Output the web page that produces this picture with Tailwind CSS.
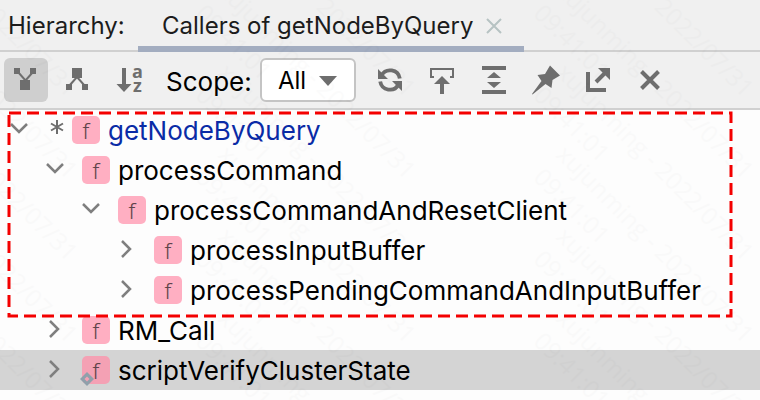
<!DOCTYPE html>
<html lang="en">
 <head>
  <meta charset="utf-8"/>
  <meta content="width=device-width, initial-scale=1" name="viewport"/>
  <title>
   Hierarchy: Callers of getNodeByQuery
  </title>
  <script src="https://cdn.jsdelivr.net/npm/@tailwindcss/browser@4"></script>
 </head>
 <body class="relative min-h-screen overflow-x-hidden bg-[#fdfdfd] font-['Inter',sans-serif] text-black">
  <header class="flex h-[52px] items-stretch border-b-2 border-[#d0d0d0] bg-[#f0f0f0] text-2xl text-[#1c1c1c]">
   <h1 class="flex w-[138px] shrink-0 items-center pt-0.5 pl-2">Hierarchy:</h1>
   <div class="-mb-0.5 flex items-center border-b-6 border-[#a3adc0] pt-1.5 pr-[22px] pl-6" role="tab">
    <span>Callers of getNodeByQuery</span>
    <button aria-label="Close tab" class="ml-[13px] text-[#b7c3c3]" type="button">
     <svg class="size-4" fill="none" stroke="currentColor" stroke-width="2" viewBox="0 0 16 16"><path d="M1 1l14 14M15 1L1 15"/></svg>
    </button>
   </div>
  </header>

  <div class="flex h-[58px] items-center border-b-2 border-[#d0d0d0] bg-[#f0f0f0] pl-1 text-[#6e6e6e]" role="toolbar">
   <div class="flex gap-2">
    <button aria-label="Callers" aria-pressed="true" class="size-11 rounded-md bg-[#cfcfcf]" type="button">
     <svg class="size-11" fill="currentColor" viewBox="0 0 44 44"><path d="M10 10h6v6h-6zM26 10h6v6h-6zM16 22h10v10H16z"/><path d="M14 14l7.500 8.500L29 14" fill="none" stroke="currentColor" stroke-width="2"/></svg>
    </button>
    <button aria-label="Callees" class="size-11" type="button">
     <svg class="size-11" fill="currentColor" viewBox="0 0 44 44"><path d="M16 10h10v10H16zM10 26h6v6h-6zM26 26h6v6h-6z"/><path d="M13 28l8-9 8 9" fill="none" stroke="currentColor" stroke-width="2"/></svg>
    </button>
    <button aria-label="Sort alphabetically" class="size-11" type="button">
     <svg class="size-11" fill="currentColor" viewBox="0 0 44 44"><path d="M14 10h4v16h5.500L16 34l-7.500-8H14z"/><text class="font-['Open_Sans',sans-serif] text-lg font-bold" x="24" y="20">a</text><text class="font-['Open_Sans',sans-serif] text-lg font-bold" x="25" y="34">z</text></svg>
    </button>
   </div>
   <label class="ml-3.5 w-[84px] pt-0.5 text-[26px] text-black" for="scope">Scope:</label>
   <div class="relative mr-3 ml-2.5 flex">
    <select class="h-11 w-24 appearance-none rounded-md border-2 border-[#c4c4c4] bg-white pt-0.5 pl-4 text-2xl text-black" id="scope">
     <option>All</option>
     <option>Project</option>
     <option>Test</option>
    </select>
    <svg class="pointer-events-none absolute top-[18px] right-[19px] h-2.5 w-[18px]" fill="currentColor" viewBox="0 0 18 10"><path d="M0 0h18L9 10z"/></svg>
   </div>
   <div class="flex gap-2">
    <button aria-label="Refresh" class="size-11" type="button">
     <svg class="size-11" viewBox="0 0 44 44"><path d="M13.500 17.500A9.800 9.800 0 0 1 31.800 20.500M30.500 26.500A9.800 9.800 0 0 1 12.200 23.500" fill="none" stroke="currentColor" stroke-width="3.800"/><path d="M10 11v10h10zM34 33V23H24z" fill="currentColor"/></svg>
    </button>
    <button aria-label="Export" class="size-11" type="button">
     <svg class="size-11" viewBox="0 0 44 44"><path d="M14 19h-3v-8h22v8h-3" fill="none" stroke="currentColor" stroke-width="2"/><path d="M22 18l8 8h-6v10h-4V26h-6z" fill="currentColor"/></svg>
    </button>
    <button aria-label="Expand all" class="size-11" type="button">
     <svg class="size-11" fill="currentColor" viewBox="0 0 44 44"><path d="M10 8h24v4H10zM10 32h24v4H10zM22 14l7 6H15zM22 30l7-6H15z"/></svg>
    </button>
    <button aria-label="Pin tab" class="size-11" type="button">
     <svg class="size-11" fill="currentColor" viewBox="0 0 44 44"><path d="M26 7.500l10 10-7.500 4.500-1 8-6-4L8.500 36.500 8 36l9.500-13-4-6 7.500-1z"/></svg>
    </button>
    <button aria-label="Open in new tab" class="size-11" type="button">
     <svg class="size-11" viewBox="0 0 44 44"><path d="M12 14v18h18M20 24l10-10" fill="none" stroke="currentColor" stroke-width="4"/><path d="M22 10h12v12z" fill="currentColor"/></svg>
    </button>
    <button aria-label="Close" class="size-11" type="button">
     <svg class="size-11" fill="none" stroke="currentColor" stroke-width="4" viewBox="0 0 44 44"><path d="M13.500 13.500l17 17M30.500 13.500l-17 17"/></svg>
    </button>
   </div>
  </div>

  <main class="text-[26px] leading-10">
   <div class="relative">
    <ul>
     <li class="flex h-10 items-center pl-[9px]">
      <button aria-label="Collapse" class="text-[#7f7f7f]" type="button">
       <svg class="size-5" fill="none" stroke="currentColor" stroke-width="2.500" viewBox="0 0 20 20"><path d="M2 4l8 8 8-8"/></svg>
      </button>
      <svg class="ml-5 size-4 overflow-visible" fill="none" stroke="#6e6e6e" stroke-width="2" viewBox="0 0 16 16"><path d="M8 -2v14M2 1.500l12 7M14 1.500l-12 7"/></svg>
      <span class="ml-[7px] flex size-7 items-center justify-center rounded-[5px] bg-[#ffafc2] font-['Noto_Sans',sans-serif] text-[22px] font-light text-[#5f434a]">f</span>
      <span class="ml-2 pt-0.5 text-[#0a2ba6]">getNodeByQuery</span>
     </li>
     <li class="flex h-10 items-center pl-[45px]">
      <button aria-label="Collapse" class="text-[#7f7f7f]" type="button">
       <svg class="size-5" fill="none" stroke="currentColor" stroke-width="2.500" viewBox="0 0 20 20"><path d="M2 4l8 8 8-8"/></svg>
      </button>
      <span class="ml-[17px] flex size-7 items-center justify-center rounded-[5px] bg-[#ffafc2] font-['Noto_Sans',sans-serif] text-[22px] font-light text-[#5f434a]">f</span>
      <span class="ml-2 pt-0.5">processCommand</span>
     </li>
     <li class="flex h-10 items-center pl-[81px]">
      <button aria-label="Collapse" class="text-[#7f7f7f]" type="button">
       <svg class="size-5" fill="none" stroke="currentColor" stroke-width="2.500" viewBox="0 0 20 20"><path d="M2 4l8 8 8-8"/></svg>
      </button>
      <span class="ml-[17px] flex size-7 items-center justify-center rounded-[5px] bg-[#ffafc2] font-['Noto_Sans',sans-serif] text-[22px] font-light text-[#5f434a]">f</span>
      <span class="ml-2 pt-0.5">processCommandAndResetClient</span>
     </li>
     <li class="flex h-10 items-center pl-[117px]">
      <button aria-label="Expand" class="text-[#7f7f7f]" type="button">
       <svg class="size-5" fill="none" stroke="currentColor" stroke-width="2.500" viewBox="0 0 20 20"><path d="M5 1l8 8-8 8"/></svg>
      </button>
      <span class="ml-[17px] flex size-7 items-center justify-center rounded-[5px] bg-[#ffafc2] font-['Noto_Sans',sans-serif] text-[22px] font-light text-[#5f434a]">f</span>
      <span class="ml-2 pt-0.5">processInputBuffer</span>
     </li>
     <li class="flex h-10 items-center pl-[117px]">
      <button aria-label="Expand" class="text-[#7f7f7f]" type="button">
       <svg class="size-5" fill="none" stroke="currentColor" stroke-width="2.500" viewBox="0 0 20 20"><path d="M5 1l8 8-8 8"/></svg>
      </button>
      <span class="ml-[17px] flex size-7 items-center justify-center rounded-[5px] bg-[#ffafc2] font-['Noto_Sans',sans-serif] text-[22px] font-light text-[#5f434a]">f</span>
      <span class="ml-2 pt-0.5">processPendingCommandAndInputBuffer</span>
     </li>
    </ul>
    <!-- dashed highlight around the call chain -->
    <div class="pointer-events-none absolute top-[3px] right-[29px] -bottom-1.5 left-[9px]">
     <svg class="size-full overflow-visible"><rect fill="none" height="100%" stroke="#f40000" stroke-dasharray="12 6" stroke-width="3" width="100%"/></svg>
    </div>
   </div>
   <ul>
    <li class="flex h-10 items-center pl-[45px]">
     <button aria-label="Expand" class="text-[#7f7f7f]" type="button">
      <svg class="size-5" fill="none" stroke="currentColor" stroke-width="2.500" viewBox="0 0 20 20"><path d="M5 1l8 8-8 8"/></svg>
     </button>
     <span class="ml-[17px] flex size-7 items-center justify-center rounded-[5px] bg-[#ffafc2] font-['Noto_Sans',sans-serif] text-[22px] font-light text-[#5f434a]">f</span>
     <span class="ml-2 pt-0.5">RM_Call</span>
    </li>
    <li class="flex h-10 items-center bg-[#d4d4d4] pl-[45px]">
     <button aria-label="Expand" class="text-[#7f7f7f]" type="button">
      <svg class="size-5" fill="none" stroke="currentColor" stroke-width="2.500" viewBox="0 0 20 20"><path d="M5 1l8 8-8 8"/></svg>
     </button>
     <span class="relative ml-[17px] flex size-7 items-center justify-center rounded-[5px] bg-[#f4a1b4] font-['Noto_Sans',sans-serif] text-[22px] font-light text-[#5f434a]">f
      <svg class="absolute -bottom-0.5 -left-0.5 size-3.5" viewBox="0 0 14 14"><path d="M7 0l7 7-7 7-7-7z" fill="#90a0ab"/><path d="M7 4.500L9.500 7 7 9.500 4.500 7z" fill="#f4a1b4"/></svg>
     </span>
     <span class="ml-2 pt-0.5">scriptVerifyClusterState</span>
    </li>
   </ul>
  </main>

  <!-- watermark -->
  <svg aria-hidden="true" class="pointer-events-none absolute inset-0 size-full opacity-[0.012]">
   <defs>
    <g class="font-['Open_Sans',sans-serif] text-2xl" id="mark"><text transform="rotate(45)" x="0" y="0">xujunming - 2022/07/31</text><text transform="rotate(45)" x="0" y="32">09:41:01</text></g>
   </defs>
   <g id="column"><use href="#mark" x="555" y="-90"/><use href="#mark" x="555" y="-8"/><use href="#mark" x="555" y="74"/><use href="#mark" x="555" y="156"/><use href="#mark" x="555" y="238"/><use href="#mark" x="555" y="320"/></g>
   <use href="#column" x="-338"/>
   <use href="#column" x="-676"/>
  </svg>
 </body>
</html>
